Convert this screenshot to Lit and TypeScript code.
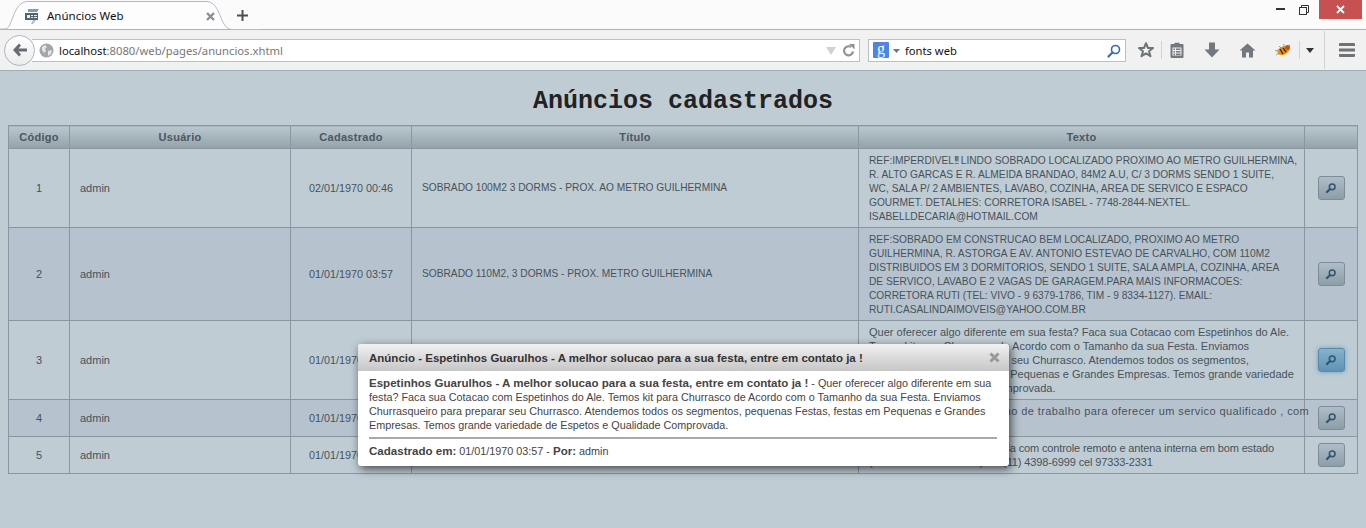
import { LitElement, html, css, svg } from 'lit';
import { customElement } from 'lit/decorators.js';

interface Anuncio {
  codigo: number;
  usuario: string;
  data: string;
  titulo: string;
  // linhas quebradas como na tabela original
  linhas: unknown[];
  caixaAlta?: boolean;
  ativo?: boolean;
  espaco?: number;
}

const anuncios: Anuncio[] = [
  {
    codigo: 1,
    usuario: 'admin',
    data: '02/01/1970 00:46',
    titulo: 'SOBRADO 100M2 3 DORMS - PROX. AO METRO GUILHERMINA',
    linhas: [
      html`REF:IMPERDIVEL<span class="excl">!!!</span> LINDO SOBRADO LOCALIZADO PROXIMO AO METRO GUILHERMINA,`,
      'R. ALTO GARCAS E R. ALMEIDA BRANDAO, 84M2 A.U, C/ 3 DORMS SENDO 1 SUITE,',
      'WC, SALA P/ 2 AMBIENTES, LAVABO, COZINHA, AREA DE SERVICO E ESPACO',
      'GOURMET. DETALHES: CORRETORA ISABEL - 7748-2844-NEXTEL.',
      'ISABELLDECARIA@HOTMAIL.COM',
    ],
    caixaAlta: true,
  },
  {
    codigo: 2,
    usuario: 'admin',
    data: '01/01/1970 03:57',
    titulo: 'SOBRADO 110M2, 3 DORMS - PROX. METRO GUILHERMINA',
    linhas: [
      'REF:SOBRADO EM CONSTRUCAO BEM LOCALIZADO, PROXIMO AO METRO',
      'GUILHERMINA, R. ASTORGA E AV. ANTONIO ESTEVAO DE CARVALHO, COM 110M2',
      'DISTRIBUIDOS EM 3 DORMITORIOS, SENDO 1 SUITE, SALA AMPLA, COZINHA, AREA',
      'DE SERVICO, LAVABO E 2 VAGAS DE GARAGEM.PARA MAIS INFORMACOES:',
      'CORRETORA RUTI (TEL: VIVO - 9 6379-1786, TIM - 9 8334-1127). EMAIL:',
      'RUTI.CASALINDAIMOVEIS@YAHOO.COM.BR',
    ],
    caixaAlta: true,
  },
  {
    codigo: 3,
    usuario: 'admin',
    data: '01/01/1970 03:57',
    titulo: 'Espetinhos Guarulhos - A melhor solucao para a sua festa, entre em contato ja !',
    linhas: [
      'Quer oferecer algo diferente em sua festa? Faca sua Cotacao com Espetinhos do Ale.',
      'Temos kit para Churrasco de Acordo com o Tamanho da sua Festa. Enviamos',
      'Churrasqueiro para preparar seu Churrasco. Atendemos todos os segmentos,',
      'pequenas Festas, festas em Pequenas e Grandes Empresas. Temos grande variedade',
      'de Espetos e Qualidade Comprovada.',
    ],
    ativo: true,
  },
  {
    codigo: 4,
    usuario: 'admin',
    data: '01/01/1970 03:57',
    titulo: 'Servicos de pintura e reformas em geral',
    linhas: ['Temos muitos anos no ramo de trabalho para oferecer um servico qualificado , com', 'garantia.'],
    espaco: 0.42,
  },
  {
    codigo: 5,
    usuario: 'admin',
    data: '01/01/1970 03:57',
    titulo: 'Televisao usada em otimo estado',
    linhas: [
      'Vendo TV 29 polegadas usada com controle remoto e antena interna em bom estado',
      '(tratar com o Sr. Carlos) tel. (11) 4398-6999 cel 97333-2331',
    ],
    espaco: -0.13,
  },
];

const lupa = svg`<svg width="12" height="12" viewBox="0 0 12 12" fill="none">
  <circle cx="7.200" cy="4.800" r="2.900" stroke="#2f566f" stroke-width="1.500"/>
  <path d="M4.800 7.200 2 10" stroke="#2f566f" stroke-width="2.200" stroke-linecap="round"/>
</svg>`;

@customElement('app-root')
export class AppRoot extends LitElement {
  static styles = css`
    :host {
      display: flex;
      flex-direction: column;
      min-height: 100vh;
      position: relative;
      font-family: 'Liberation Sans', Arial, sans-serif;
      background: #bfccd4;
    }
    svg { display: block; flex: none; }

    /* barra de abas */
    .tabstrip {
      height: 30px;
      box-sizing: border-box;
      background: #fbfbfb;
      border-bottom: 1px solid #a9b4bd;
      display: flex;
      align-items: flex-start;
      position: relative;
    }
    .tab-shape { position: absolute; left: 0; top: 0; }
    .tab {
      position: relative;
      width: 216px;
      margin-left: 12px;
      height: 30px;
      box-sizing: border-box;
      padding: 2px 13px 0 13px;
      display: flex;
      align-items: center;
      gap: 8px;
      font: 11.500px/16px 'Noto Sans', 'Open Sans', sans-serif;
      color: #111;
    }
    .tab-title { flex: 1; }
    .newtab {
      position: relative;
      margin-left: 9px;
      height: 30px;
      padding-top: 1px;
      box-sizing: border-box;
      display: flex;
      align-items: center;
    }
    .winctl {
      margin-left: auto;
      display: flex;
      align-items: center;
      height: 19px;
      padding-right: 4px;
    }
    .winbtn { width: 24px; height: 19px; display: flex; align-items: center; justify-content: center; }
    .close { width: 43px; background: #c75050; margin-left: 3px; }

    /* barra de navegacao */
    .toolbar {
      height: 41px;
      box-sizing: border-box;
      background: #f1f1f1;
      border-bottom: 1px solid #a2adb5;
      display: flex;
      align-items: center;
      padding-left: 4px;
      position: relative;
    }
    .back {
      width: 31px;
      height: 31px;
      box-sizing: border-box;
      border-radius: 50%;
      border: 1px solid #aeb6bd;
      background: linear-gradient(#fff, #ececec);
      display: flex;
      align-items: center;
      justify-content: center;
      position: relative;
      z-index: 1;
      flex: none;
    }
    .urlbar {
      width: 828px;
      margin-left: -3px;
      height: 23px;
      box-sizing: border-box;
      background: #fff;
      border: 1px solid #b6c1ca;
      border-left: none;
      display: flex;
      align-items: center;
      padding: 1px 4px 0 7px;
      gap: 5px;
      font: 11.250px/16px 'Noto Sans', 'Open Sans', sans-serif;
      color: #777;
      flex: none;
    }
    .url { flex: 1; white-space: nowrap; }
    .url b { font-weight: 400; color: #111; }
    .reload { margin-left: 1px; }
    .searchbar {
      width: 258px;
      margin-left: 8px;
      height: 23px;
      box-sizing: border-box;
      background: #fff;
      border: 1px solid #b6c1ca;
      display: flex;
      align-items: center;
      padding: 1px 4px 0;
      font: 11.200px/16px 'Noto Sans', 'Open Sans', sans-serif;
      color: #111;
      flex: none;
    }
    .gbox {
      width: 16px;
      height: 16px;
      margin-top: -1px;
      border-radius: 1px;
      background: #4a86e8;
      color: #fff;
      font: 16px/13px 'Liberation Serif', serif;
      text-align: center;
    }
    .caret { margin: 0 5px 0 4px; }
    .stext { flex: 1; }
    .tools { display: flex; align-items: center; height: 100%; margin-left: 5px; }
    .ti { display: flex; justify-content: center; align-items: center; }
    .w20 { width: 20px; margin-right: 4px; }
    .w29 { width: 29px; }
    .w30 { width: 30px; }
    .w41 { width: 41px; }
    .w43 { width: 43px; }
    .bug { margin-right: -4px; }
    .vsep { width: 1px; height: 18px; background: #cfd3d6; flex: none; }
    .vsep.alto { height: 38px; }

    /* pagina */
    .page { flex: 1; }
    h1 {
      margin: 0;
      height: 54px;
      box-sizing: border-box;
      padding-top: 17px;
      text-align: center;
      font: bold 25px/28px 'Liberation Mono', 'Courier New', monospace;
      color: #222;
    }
    table {
      border-collapse: collapse;
      table-layout: fixed;
      width: 1350px;
      margin-left: 8px;
      font-size: 11px;
      line-height: 14px;
      color: #47525a;
    }
    .col-codigo { width: 61px; }
    .col-usuario { width: 221px; }
    .col-data { width: 121px; }
    .col-titulo { width: 447px; }
    .col-texto { width: 446px; }
    .col-acao { width: 53px; }
    th {
      height: 22px;
      padding: 0;
      border: 1px solid #8a979f;
      background: linear-gradient(#bac7ce, #93a2aa);
      font-size: 11px;
      letter-spacing: 0.3px;
      color: #4c575f;
    }
    td {
      border: 1px solid #8a979f;
      padding: 4px 10px;
      vertical-align: middle;
    }
    tr.par td { background: #b6c3ce; }
    .c { text-align: center; }
    .data { font-size: 10.800px; padding: 4px 0; }
    .alta { font-size: 10.200px; }
    .texto-alta { padding: 5px 10px 3px; }
    .linha { white-space: nowrap; }
    .excl { letter-spacing: -1.500px; }
    .btn {
      width: 27px;
      height: 24px;
      box-sizing: border-box;
      margin: 0 auto;
      border: 1px solid #7d8d98;
      border-radius: 3px;
      background: linear-gradient(#aebdc7, #8d9ea9);
      display: flex;
      align-items: center;
      justify-content: center;
    }
    .btn.ativo {
      background: linear-gradient(#86b2cc, #5f93b4);
      border-color: #5b8aa8;
      box-shadow: 0 0 5px #6a9fc0;
    }
    td.acao { padding: 0; }

    /* dialogo */
    .dialog {
      position: absolute;
      left: 358px;
      top: 344px;
      width: 651px;
      height: 122px;
      background: #fff;
      border-radius: 3px;
      box-shadow: 2px 3px 10px rgba(0, 0, 0, 0.65);
      font-size: 10.800px;
      line-height: 14px;
      color: #444;
    }
    .dlg-head {
      height: 27px;
      box-sizing: border-box;
      padding: 0 9px 0 11px;
      display: flex;
      align-items: center;
      justify-content: space-between;
      background: linear-gradient(#f1f1f1, #c6c6c6);
      border-radius: 3px 3px 0 0;
      font-size: 11.500px;
      font-weight: bold;
      color: #333;
    }
    .dlg-body { padding: 5px 12px 0 11px; }
    .dlg-body b { font-size: 11.550px; }
    .dlg-body p { margin: 0; white-space: nowrap; }
    hr { border: none; height: 2px; background: #a8a8a8; margin: 5px 0 5px; }
  `;

  private renderTabShape() {
    return svg`<svg class="tab-shape" width="260" height="30" viewBox="0 0 260 30" fill="none">
      <path d="M0 29H5C13 29 12 3 27 2H207C222 3 219 29 232 29H260" fill="#fdfdfd"/>
      <path d="M0 29H5C13 29 12 3 27 1.500H207C222 3 219 29 232 29.500H260" stroke="#b3bcc3"/>
    </svg>`;
  }

  private renderFavicon() {
    return svg`<svg width="14" height="15" viewBox="0 0 14 15">
      <path d="M3 0H14L12 3H3Z" fill="#7f9db3"/>
      <rect x="0" y="4" width="13" height="7" fill="#55626c"/>
      <path d="M2 6h3v3H2zM6 6h2v1H6zM9 6h3v1H9zM6 8h2v1H6zM9 8h3v1H9z" fill="#e8edf0"/>
      <path d="M8 11H11L8 15H6Z" fill="#a9bdcb"/>
    </svg>`;
  }

  private renderFirebug() {
    return svg`<svg width="18" height="14" viewBox="0 0 18 14">
      <path d="M2 12 6 9M1 8 5 7M5 3 7 5M10 1 10 4M16 2 13 4" stroke="#999" stroke-width="1"/>
      <ellipse cx="9.500" cy="7.500" rx="6.500" ry="4" fill="#e8920c" transform="rotate(-25 9.500 7.500)"/>
      <circle cx="13.500" cy="4.500" r="2.500" fill="#c9501a"/>
      <path d="M6 6 9 11M9 5 12 9" stroke="#3a2a10" stroke-width="1.400"/>
    </svg>`;
  }

  private renderToolbarIcons() {
    return html`
      <div class="tools">
        <div class="ti w30">
          <svg width="18" height="18" viewBox="0 0 18 18"><path d="M9 2.200 11 7h5l-4 3.200 1.500 5L9 12.400l-4.500 2.800 1.500-5L2 7h5Z" fill="#f4f4f4" stroke="#6d7377" stroke-width="2" stroke-linejoin="round"/></svg>
        </div>
        <div class="vsep"></div>
        <div class="ti w29">
          <svg width="14" height="16" viewBox="0 0 14 16"><path d="M1.500 2H4.500V.8H9.500V2H12.500A1 1 0 0 1 13.500 3V15A1 1 0 0 1 12.500 16H1.500A1 1 0 0 1 .5 15V3A1 1 0 0 1 1.500 2Z" fill="#72787d"/><path d="M2.500 5.500h9v8h-9z" fill="#f1f1f1"/><path d="M3.500 6.500h1.500v1.500H3.500zM6 6.500h4.500v1.500H6zM3.500 9h1.500v1.500H3.500zM6 9h4.500v1.500H6zM3.500 11.500h1.500V13H3.500zM6 11.500h4.500V13H6z" fill="#72787d"/></svg>
        </div>
        <div class="ti w41">
          <svg width="16" height="16" viewBox="0 0 16 16"><path d="M5 .5H11V7.500H15.500L8 15.500 .5 7.500H5Z" fill="#72787d"/></svg>
        </div>
        <div class="ti w30">
          <svg width="17" height="15" viewBox="0 0 17 15"><path d="M8.500 .5 16.500 7.500H14V14.500H10V9.500H7V14.500H3V7.500H.5Z" fill="#72787d"/></svg>
        </div>
        <div class="ti w41 bug">${this.renderFirebug()}</div>
        <div class="vsep"></div>
        <div class="ti w20">
          <svg width="8" height="5" viewBox="0 0 8 5"><path d="M0 0H8L4 5Z" fill="#333"/></svg>
        </div>
        <div class="vsep alto"></div>
        <div class="ti w43">
          <svg width="16" height="14" viewBox="0 0 16 14"><path d="M1 0H15a1 1 0 0 1 1 1V3H0V1a1 1 0 0 1 1-1ZM0 5.500H16V8.500H0ZM0 11H16V13a1 1 0 0 1-1 1H1a1 1 0 0 1-1-1Z" fill="#6d7377"/></svg>
        </div>
      </div>
    `;
  }

  render() {
    return html`
      <div class="tabstrip">
        ${this.renderTabShape()}
        <div class="tab">
          ${this.renderFavicon()}
          <span class="tab-title">Anúncios Web</span>
          <svg width="9" height="9" viewBox="0 0 9 9"><path d="M1 1 8 8M8 1 1 8" stroke="#8a9096" stroke-width="2.400"/></svg>
        </div>
        <div class="newtab">
          <svg width="11" height="11" viewBox="0 0 11 11"><path d="M5.500 0V11M0 5.500H11" stroke="#4a5056" stroke-width="2"/></svg>
        </div>
        <div class="winctl">
          <div class="winbtn"><svg width="9" height="3" viewBox="0 0 9 3"><rect y="0" width="9" height="2" fill="#333"/></svg></div>
          <div class="winbtn"><svg width="10" height="10" viewBox="0 0 10 10" fill="none"><path d="M2.500 2V.5H9.500V7.500H7.500" stroke="#333"/><rect x=".5" y="2.500" width="7" height="7" stroke="#333"/></svg></div>
          <div class="winbtn close"><svg width="9" height="9" viewBox="0 0 9 9"><path d="M1 1 8 8M8 1 1 8" stroke="#fff" stroke-width="1.800"/></svg></div>
        </div>
      </div>

      <div class="toolbar">
        <div class="back">
          <svg width="16" height="14" viewBox="0 0 16 14"><path d="M7 .5 1 7l6 6.500 2-2L6.500 8.500H15v-3H6.500L9 2.500Z" fill="#666c71"/></svg>
        </div>
        <div class="urlbar">
          <svg width="15" height="15" viewBox="0 0 15 15"><circle cx="7.500" cy="7.500" r="7" fill="#a3a7aa"/><path d="M3 4 6 2 8 4 6 6 7 8 5 10 3 7ZM9 8l4-1-1 4-3 2Z" fill="#e3e5e6"/></svg>
          <span class="url"><b>localhost</b>:8080/web/pages/anuncios.xhtml</span>
          <svg width="10" height="8" viewBox="0 0 10 8"><path d="M0 0H10L5 8Z" fill="#ccd2d6"/></svg>
          <svg class="reload" width="13" height="13" viewBox="0 0 13 13" fill="none"><path d="M11 7.500A4.500 4.500 0 1 1 9 3" stroke="#8d9399" stroke-width="2.200"/><path d="M7 0H12.500V5.500Z" fill="#8d9399"/></svg>
        </div>
        <div class="searchbar">
          <div class="gbox">g</div>
          <svg class="caret" width="7" height="4" viewBox="0 0 7 4"><path d="M0 0H7L3.500 4Z" fill="#777"/></svg>
          <span class="stext">fonts web</span>
          <svg width="14" height="14" viewBox="0 0 14 14" fill="none"><circle cx="8.500" cy="5.500" r="4" stroke="#2e6fb0" stroke-width="1.600"/><path d="M5.500 8.500 1.500 12.500" stroke="#2e6fb0" stroke-width="2.200" stroke-linecap="round"/></svg>
        </div>
        ${this.renderToolbarIcons()}
      </div>

      <div class="page">
        <h1>Anúncios cadastrados</h1>
        <table>
          <colgroup>
            <col class="col-codigo" /><col class="col-usuario" /><col class="col-data" />
            <col class="col-titulo" /><col class="col-texto" /><col class="col-acao" />
          </colgroup>
          <thead>
            <tr><th>Código</th><th>Usuário</th><th>Cadastrado</th><th>Título</th><th>Texto</th><th></th></tr>
          </thead>
          <tbody>
            ${anuncios.map(
              (a, i) => html`
                <tr class=${i % 2 ? 'par' : ''}>
                  <td class="c">${a.codigo}</td>
                  <td>${a.usuario}</td>
                  <td class="c data">${a.data}</td>
                  <td class=${a.caixaAlta ? 'alta' : ''}>${a.titulo}</td>
                  <td class=${a.caixaAlta ? 'alta texto-alta' : ''} style=${a.espaco ? `letter-spacing:${a.espaco}px` : ''}>
                    ${a.linhas.map((l) => html`<div class="linha">${l}</div>`)}
                  </td>
                  <td class="acao"><div class="btn ${a.ativo ? 'ativo' : ''}">${lupa}</div></td>
                </tr>
              `
            )}
          </tbody>
        </table>
      </div>

      <div class="dialog">
        <div class="dlg-head">
          <span>Anúncio - Espetinhos Guarulhos - A melhor solucao para a sua festa, entre em contato ja !</span>
          <svg width="11" height="11" viewBox="0 0 11 11"><path d="M1.500 1.500 9.500 9.500M9.500 1.500 1.500 9.500" stroke="#999" stroke-width="3"/></svg>
        </div>
        <div class="dlg-body">
          <p><b>Espetinhos Guarulhos - A melhor solucao para a sua festa, entre em contato ja !</b> - Quer oferecer algo diferente em sua</p>
          <p>festa? Faca sua Cotacao com Espetinhos do Ale. Temos kit para Churrasco de Acordo com o Tamanho da sua Festa. Enviamos</p>
          <p>Churrasqueiro para preparar seu Churrasco. Atendemos todos os segmentos, pequenas Festas, festas em Pequenas e Grandes</p>
          <p>Empresas. Temos grande variedade de Espetos e Qualidade Comprovada.</p>
          <hr />
          <p><b>Cadastrado em:</b> 01/01/1970 03:57 - <b>Por:</b> admin</p>
        </div>
      </div>
    `;
  }
}
